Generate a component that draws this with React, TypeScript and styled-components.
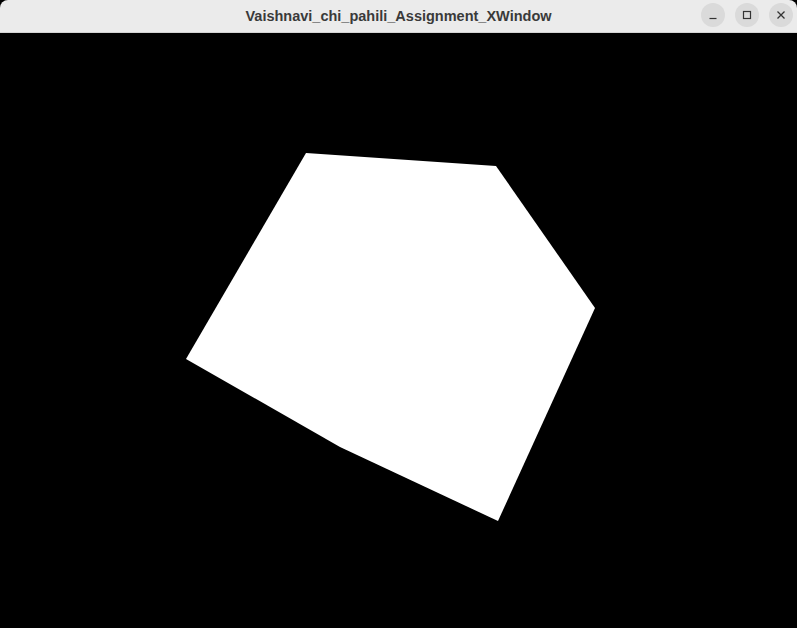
import styled, { createGlobalStyle } from "styled-components";

const GlobalStyle = createGlobalStyle`
  html, body {
    margin: 0;
    padding: 0;
    background: #000;
  }
`;

// window vertices, in canvas coordinates (canvas starts below the 33px title bar)
const SHAPE = [
  [306, 153],
  [496, 166],
  [595, 308],
  [498, 521],
  [340, 447],
  [186, 359],
].map(([x, y]) => `${x},${y - 33}`).join(" ");

export default function App() {
  return (
    <>
      <GlobalStyle />
      <Window>
        <TitleBar>
          <Title>Vaishnavi_chi_pahili_Assignment_XWindow</Title>
          <Controls>
            <ControlButton aria-label="minimize">
              <svg width="10" height="10" viewBox="0 0 10 10">
                <path d="M1.5 8.5h7" stroke="#333" strokeWidth="1.2" />
              </svg>
            </ControlButton>
            <ControlButton aria-label="maximize">
              <svg width="10" height="10" viewBox="0 0 10 10">
                <rect x="1.5" y="1.5" width="7" height="7" fill="none" stroke="#333" strokeWidth="1.2" />
              </svg>
            </ControlButton>
            <ControlButton aria-label="close">
              <svg width="10" height="10" viewBox="0 0 10 10">
                <path d="M1.5 1.5l7 7M8.5 1.5l-7 7" stroke="#333" strokeWidth="1.3" />
              </svg>
            </ControlButton>
          </Controls>
        </TitleBar>
        <Canvas>
          <svg width="797" height="595" viewBox="0 0 797 595">
            <polygon points={SHAPE} fill="#fff" />
          </svg>
        </Canvas>
      </Window>
    </>
  );
}

const Window = styled.div`
  width: 797px;
  height: 628px;
  display: flex;
  flex-direction: column;
  background: #000;
  overflow: hidden;
  border-radius: 8px 8px 0 0;
`;

const TitleBar = styled.div`
  height: 32px;
  flex: none;
  display: flex;
  align-items: center;
  justify-content: center;
  position: relative;
  background: #ebebeb;
  border-bottom: 1px solid #d4d4d4;
`;

const Title = styled.div`
  font-family: "Liberation Sans", Arial, sans-serif;
  font-weight: bold;
  font-size: 14.5px;
  color: #3a3a3a;
`;

const Controls = styled.div`
  position: absolute;
  right: 4px;
  top: 3px;
  display: flex;
  gap: 10px;
`;

const ControlButton = styled.button`
  width: 24px;
  height: 24px;
  border: none;
  padding: 0;
  border-radius: 50%;
  background: #dadada;
  display: flex;
  align-items: center;
  justify-content: center;

  & > svg {
    display: block;
  }
`;

const Canvas = styled.div`
  flex: 1;
  background: #000;

  & > svg {
    display: block;
  }
`;
